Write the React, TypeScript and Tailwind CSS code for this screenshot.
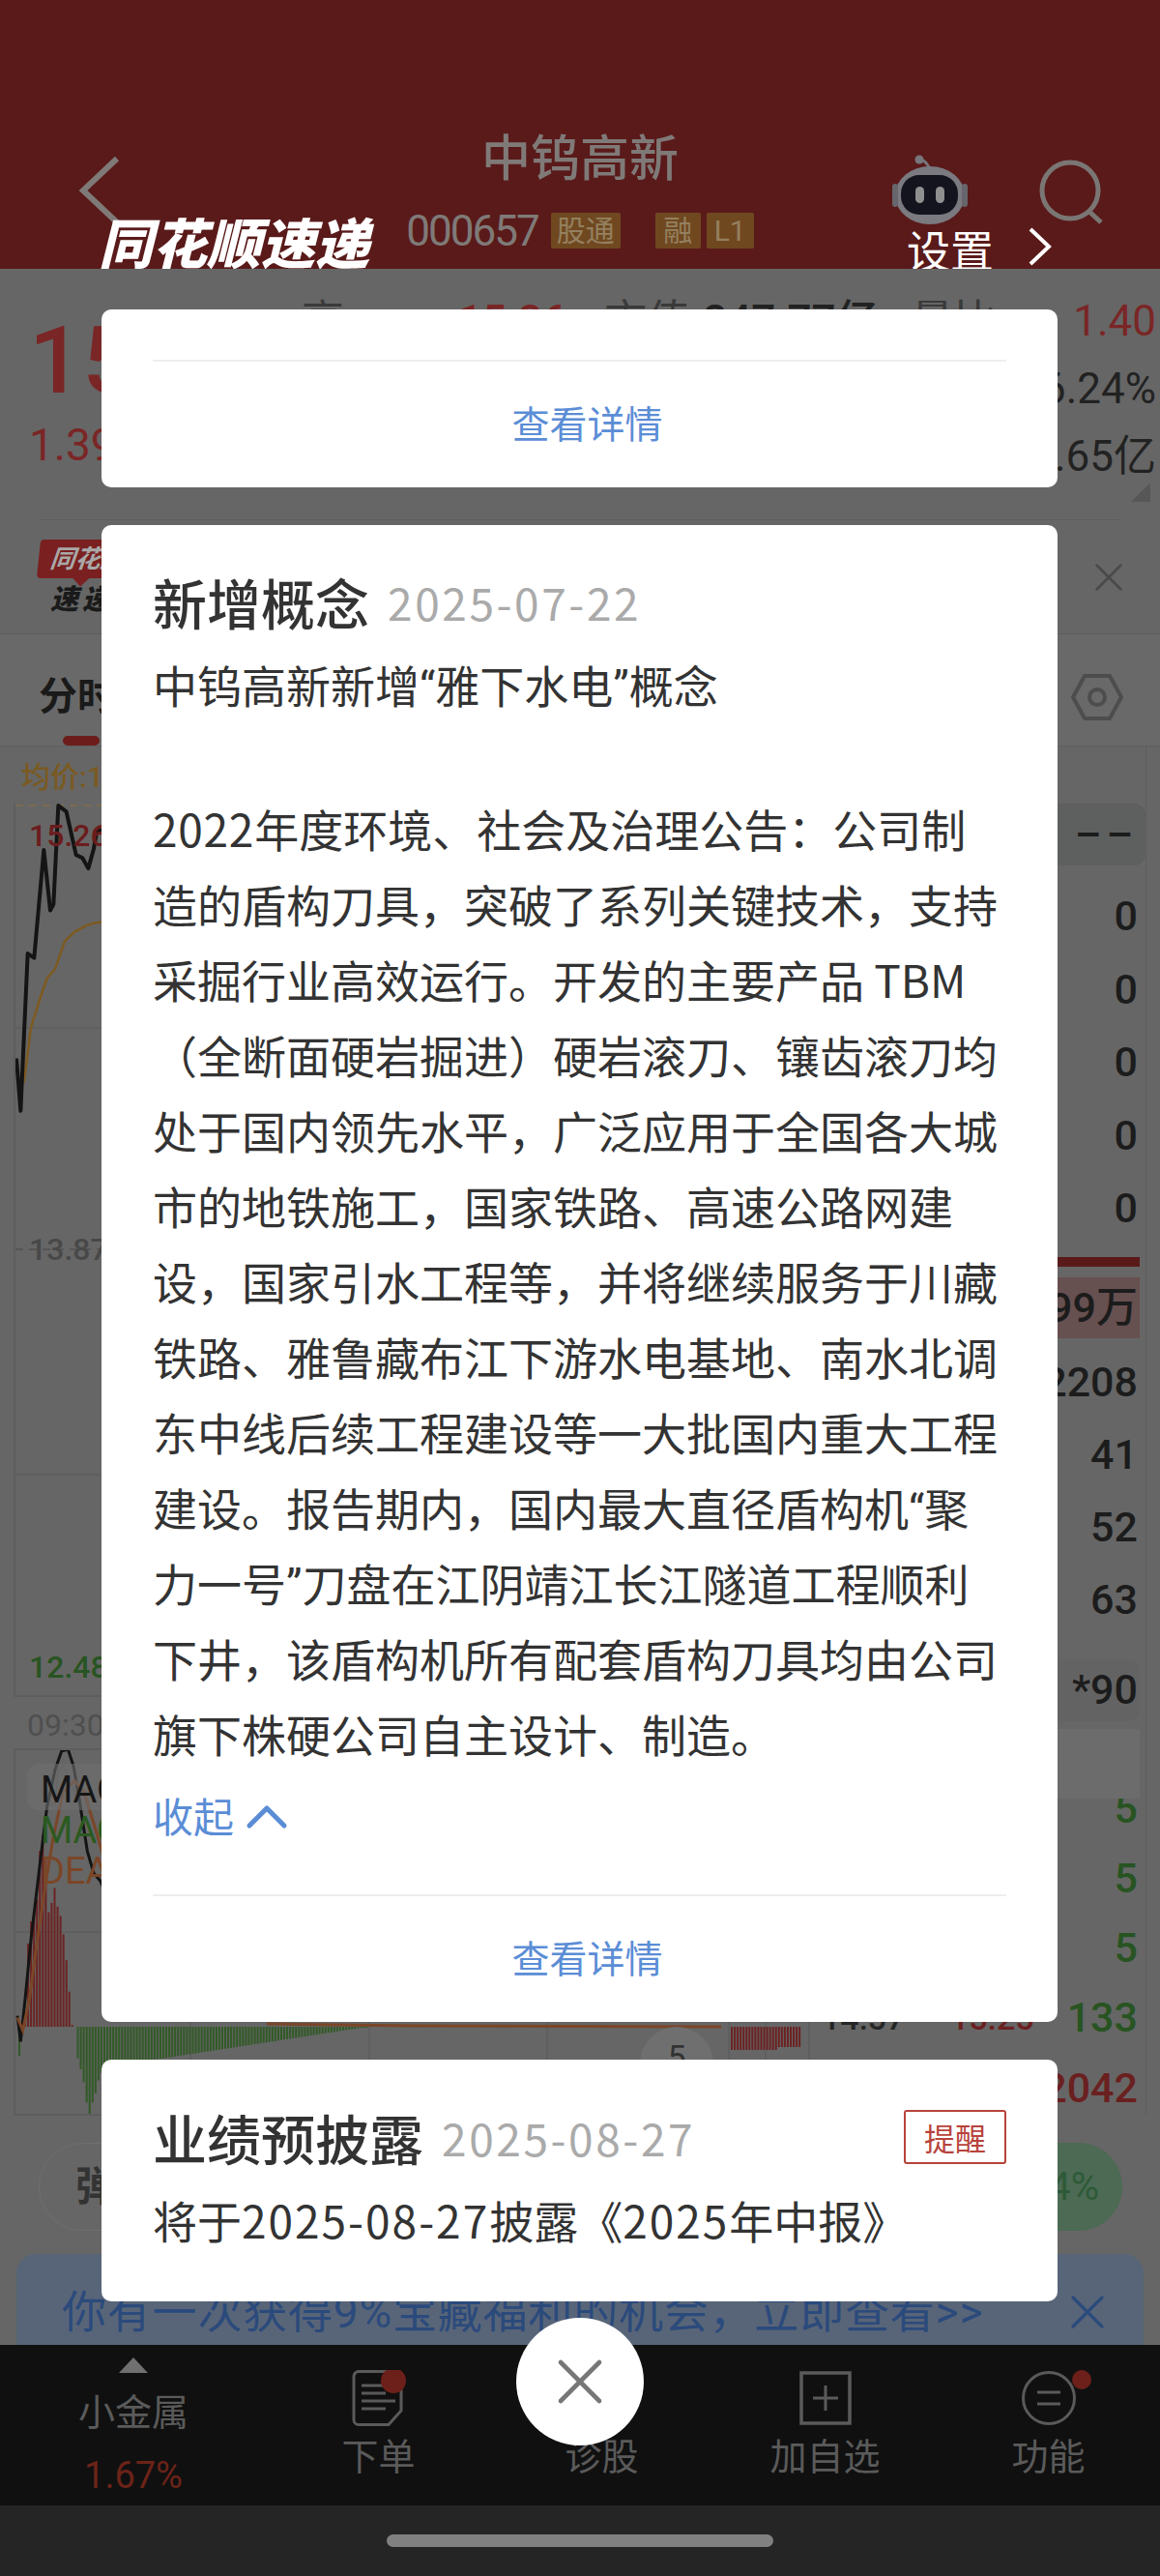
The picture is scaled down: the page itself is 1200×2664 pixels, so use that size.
import React from 'react';
import { ChevronUp, X } from 'lucide-react';

// page coordinates -> svg coordinates for the two charts
const pts = (list: number[][], sx: number, sy: number, oy: number) =>
  list.map(([x, y]) => `${x / sx - 14},${oy + y / sy}`).join(' ');

const priceLine = [[45, 650], [58, 735], [80, 480], [100, 487], [130, 312], [150, 410], [160, 400], [175, 240], [200, 250], [230, 320], [250, 325], [268, 342], [285, 310], [295, 280], [330, 280]];
const avgLine = [[68, 690], [90, 600], [120, 550], [140, 520], [165, 505], [195, 460], [225, 445], [260, 435], [290, 430], [330, 428]];
const difLine = [[48, 1005], [58, 1075], [72, 960], [90, 800], [120, 580], [140, 440], [165, 340], [185, 290], [205, 285], [222, 330], [240, 420], [265, 560], [285, 620], [305, 640], [330, 690]];
const deaLine = [[48, 1010], [65, 1045], [85, 960], [110, 800], [135, 650], [160, 520], [190, 400], [225, 370], [255, 400], [290, 500], [330, 620]];
const maLine = [[130, 445], [150, 435], [165, 430], [175, 340], [190, 330], [210, 370], [235, 420]];

const redTops = [1000, 810, 750, 720, 690, 560, 515, 640, 725, 700, 660, 710, 735, 785, 855, 940, 1030];
const greenBottoms = [1120, 1150, 1185, 1240, 1275, 1240, 1215, 1180, 1160];

const tickRows = ['2208', '41', '52', '63'];

const paragraph = [
  '2022年度环境、社会及治理公告：公司制',
  '造的盾构刀具，突破了系列关键技术，支持',
  '采掘行业高效运行。开发的主要产品 TBM',
  '（全断面硬岩掘进）硬岩滚刀、镶齿滚刀均',
  '处于国内领先水平，广泛应用于全国各大城',
  '市的地铁施工，国家铁路、高速公路网建',
  '设，国家引水工程等，并将继续服务于川藏',
  '铁路、雅鲁藏布江下游水电基地、南水北调',
  '东中线后续工程建设等一大批国内重大工程',
  '建设。报告期内，国内最大直径盾构机“聚',
  '力一号”刀盘在江阴靖江长江隧道工程顺利',
  '下井，该盾构机所有配套盾构刀具均由公司',
  '旗下株硬公司自主设计、制造。',
];

// the app sets curly quotes in a latin face and its digits a little wider
function BodyText({ text, digits = 'tracking-[0.75px]' }: { text: string; digits?: string }) {
  return (
    <>
      {text.split(/([“”]|\d[\d-]*)/).map((part, i) => {
        if (part === '“' || part === '”') return <span key={i} className="font-['Roboto'] leading-none">{part}</span>;
        if (/^\d/.test(part)) return <span key={i} className={digits}>{part}</span>;
        return part;
      })}
    </>
  );
}

function PriceChart() {
  return (
    <svg className="absolute inset-0" width="824" height="924" fill="none">
      <line x1="0" y1="2" x2="824" y2="2" stroke="#7a6a50" strokeWidth="2" strokeDasharray="8 6" />
      <line x1="0" y1="232" x2="824" y2="232" stroke="#5e5e5e" strokeWidth="1.5" />
      <line x1="0" y1="461" x2="824" y2="461" stroke="#555" strokeWidth="2" strokeDasharray="8 6" />
      <line x1="0" y1="694" x2="824" y2="694" stroke="#5e5e5e" strokeWidth="1.5" />
      <polyline points={pts(avgLine, 3, 1.568, -151)} stroke="#7d5a20" strokeWidth="2.5" />
      <polyline points={pts(priceLine, 3, 1.568, -151)} stroke="#141414" strokeWidth="4" strokeLinejoin="round" />
    </svg>
  );
}

function MacdChart() {
  const oy = -110;
  const zero = 286;
  return (
    <svg className="absolute inset-0" width="820" height="376" fill="none">
      <line x1="0" y1="188" x2="820" y2="188" stroke="#5e5e5e" strokeWidth="1.5" />
      {[181, 366, 550, 738, 776].map((x) => (
        <line key={x} x1={x} y1="0" x2={x} y2="376" stroke="#5e5e5e" strokeWidth="1.5" />
      ))}
      {redTops.map((t, i) => (
        <rect key={i} x={9 + i * 3.05} y={oy + t / 2.613} width="2" height={zero - (oy + t / 2.613)} fill="#6b2222" />
      ))}
      <rect x="3" y={zero} width="2" height="30" fill="#315a26" />
      {greenBottoms.map((b, i) => (
        <rect key={i} x={63.5 + i * 3.05} y={zero} width="2" height={(b - 1035) / 2.613} fill="#315a26" />
      ))}
      {Array.from({ length: 90 }, (_, i) => (
        <rect key={i} x={91 + i * 3.05} y={zero} width="2" height={Math.max(1, 42 - i * 0.47)} fill="#315a26" />
      ))}
      <polyline points={pts(maLine, 3, 2.613, oy)} stroke="#5c5c5c" strokeWidth="2" />
      <polyline points={pts(difLine, 3, 2.613, oy)} stroke="#141414" strokeWidth="3" />
      <polyline points={pts(deaLine, 3, 2.613, oy)} stroke="#7a4628" strokeWidth="3" />
      <polyline points="260,283 328,284 412,285 730,286" stroke="#7a4628" strokeWidth="3" />
      {Array.from({ length: 24 }, (_, i) => (
        <rect key={i} x={740 + i * 3.05} y={zero} width="2" height={24 - (i > 15 ? 3 : 0)} fill="#6b2222" />
      ))}
    </svg>
  );
}

function TickColumn() {
  return (
    <div className="w-[348px] flex flex-col text-[43px] leading-none font-medium text-[#1c1c1c] border-r border-[#5e5e5e]">
      <div className="h-[59px] shrink-0" />
      <div className="h-[64px] shrink-0 flex items-center justify-end pr-[8px] bg-[#5d605e] rounded-r-xl border-t border-[#5e5e5e] tracking-[5px]">––</div>
      <div className="mt-[15px] flex flex-col">
        {[0, 1, 2, 3, 4].map((i) => (
          <div key={i} className="h-[75.5px] flex items-center justify-end pr-[8px]">0</div>
        ))}
      </div>
      <div className="mt-[12px] h-[10px] mr-[6px] bg-[#5a1a1a]" />
      <div className="mt-[11px] h-[63px] mr-[6px] bg-[#675050] flex items-center justify-end pr-[2px]">1.99万</div>
      <div className="mt-[8px] flex flex-col">
        {tickRows.map((v) => (
          <div key={v} className="h-[75px] flex items-center justify-end pr-[8px]">{v}</div>
        ))}
      </div>
      <div className="mt-[24px] h-[64px] mr-[6px] rounded-xl bg-[#636363] flex items-center justify-end pr-[2px]">*90</div>
      <div className="relative z-10 mt-[8px] h-[72px] mr-[6px] bg-[#6c6c6c]" />
      <div className="-mt-[25px] flex flex-col text-[#285422]">
        {['5', '5', '5'].map((v, i) => (
          <div key={i} className="h-[72px] flex items-center justify-end pr-[8px]">{v}</div>
        ))}
        <div className="h-[72px] flex items-center justify-end pr-[8px]">
          <span className="flex-1 pl-[12px] text-[34px] text-[#262626]">14:57</span>
          <span className="mr-[34px] text-[34px] text-[#6b2020]">15.25</span>
          <span>133</span>
        </div>
        <div className="h-[65px] pt-[15px] text-right pr-[8px] text-[#6b2020]">2042</div>
      </div>
    </div>
  );
}

function Card({ children, className }: { children: React.ReactNode; className: string }) {
  return <div className={`bg-white rounded-[10px] px-[53px] ${className}`}>{children}</div>;
}

function DetailLink() {
  return (
    <div className="border-t-2 border-[#eeeeee] flex-1 flex items-center justify-center pl-[16px] pb-[6px] text-[39px] text-[#5b8dd6]">
      查看详情
    </div>
  );
}

function NavLabel({ children }: { children: React.ReactNode }) {
  return <div className="mt-[11px] h-[42px] leading-[42px] text-[38px] text-[#5a5a5a]">{children}</div>;
}

export default function App() {
  return (
    <div className="relative w-[1200px] h-[2664px] overflow-hidden bg-[#666666] font-['Roboto','Noto_Sans_CJK_SC',sans-serif]">
      {/* Header */}
      <header className="relative h-[278px] bg-[#5a1a1a] overflow-hidden flex flex-col items-center pt-[138px]">
        <div className="text-[51px] leading-[54px] font-medium text-[#7f7a78]">中钨高新</div>
        <div className="mt-[28px] flex items-center h-[37px] text-[30px] text-[#94805f]">
          <span className="text-[44px] tracking-[-2px] text-[#7f7a78] mr-[13px]">000657</span>
          <span className="w-[72px] h-[37px] bg-[#704820] rounded-[2px] flex items-center justify-center">股通</span>
          <span className="ml-[36px] w-[47px] h-[37px] bg-[#704820] rounded-[2px] flex items-center justify-center">融</span>
          <span className="ml-[6px] w-[49px] h-[37px] bg-[#704820] rounded-[2px] flex items-center justify-center">L1</span>
        </div>
        <svg className="absolute left-[80px] top-[160px]" width="50" height="72" fill="none" stroke="#7f7a78" strokeWidth="6">
          <polyline points="41,4 6,37 41,70" />
        </svg>
        <svg className="absolute left-[915px] top-[155px]" width="95" height="80" viewBox="915 155 95 80" fill="none">
          <path d="M951 165 Q957 165 961 173" stroke="#77767c" strokeWidth="3" />
          <circle cx="951" cy="165" r="4.5" fill="#77767c" />
          <ellipse cx="962" cy="202" rx="36" ry="30" fill="#7a7a80" />
          <rect x="923" y="190" width="6" height="24" rx="3" fill="#66666c" />
          <rect x="995" y="190" width="6" height="24" rx="3" fill="#66666c" />
          <rect x="932" y="181" width="59" height="41" rx="19" fill="#14141f" />
          <rect x="947" y="193" width="9" height="17" rx="4.5" fill="#8f8f8f" />
          <rect x="968" y="193" width="9" height="17" rx="4.5" fill="#8f8f8f" />
        </svg>
        <svg className="absolute left-[1070px] top-[160px]" width="75" height="75" fill="none" stroke="#7a7674" strokeWidth="5">
          <circle cx="37" cy="37" r="29" />
          <line x1="56" y1="58" x2="69" y2="70" />
        </svg>
        <div className="absolute left-[102px] top-[224px] text-[56px] leading-[60px] font-black italic text-white whitespace-nowrap">同花顺速递</div>
        <div className="absolute left-[938px] top-[238px] text-[45px] leading-[48px] text-white">设置</div>
        <svg className="absolute left-[1060px] top-[232px]" width="32" height="46" fill="none" stroke="#ffffff" strokeWidth="4">
          <polyline points="6,5 25,23 6,41" />
        </svg>
      </header>

      {/* Quote summary */}
      <section className="relative h-[259px] flex pl-[30px] pr-[4px]">
        <div className="w-[282px] flex flex-col text-[#7a2626]">
          <div className="mt-[39px] text-[97px] leading-[112px] font-medium">15.26</div>
          <div className="mt-[4px] text-[46px] leading-[54px]">1.39 10.03%</div>
        </div>
        <div className="flex-1 flex flex-col text-[44px] leading-[70px] text-[#222222]">
          <div className="mt-[19px] flex">
            <span className="text-[#3a3a3a]">高</span>
            <span className="ml-[118px] text-[#7a2626] font-medium">15.36</span>
            <span className="ml-[39px] text-[#3a3a3a]">市值</span>
            <span className="ml-[14px] font-medium">247.77亿</span>
            <span className="ml-[34px] text-[#3a3a3a]">量比</span>
            <span className="ml-auto text-[#7a2626]">1.40</span>
          </div>
          <div className="text-right">6.24%</div>
          <div className="text-right">3.65亿</div>
        </div>
        <div className="absolute right-[10px] bottom-[18px] w-0 h-0 border-l-[20px] border-l-transparent border-b-[20px] border-b-[#575757]" />
      </section>

      {/* News strip */}
      <section className="h-[118px] mx-[40px] border-t border-[#5e5e5e] flex items-center justify-between">
        <div className="flex flex-col items-start">
          <div className="relative h-[40px] w-[150px] bg-[#7a2020] rounded-[4px] -skew-x-6 flex items-center pl-[12px] text-[26px] font-bold italic text-[#a8a8a8] whitespace-nowrap">
            同花顺
            <span className="absolute left-[40px] -bottom-[6px] w-[12px] h-[12px] rotate-45 bg-[#7a2020]" />
          </div>
          <div className="mt-[7px] ml-[12px] text-[29px] leading-[30px] font-black italic tracking-[4px] text-[#1a1a1a]">速递</div>
        </div>
        <X className="-mr-[12px] w-[50px] h-[50px] text-[#4a4a4a]" strokeWidth={1.2} />
      </section>

      {/* Tabs */}
      <section className="relative h-[117px] border-t border-b border-[#5e5e5e] bg-[#696969] flex items-center justify-between pl-[40px] pr-[38px] pt-[14px]">
        <span className="text-[40px] font-bold text-[#1a1a1a]">分时</span>
        <svg width="54" height="50" viewBox="0 0 54 50" fill="none" stroke="#4d4d4d" strokeWidth="4">
          <polygon points="14,3 40,3 52,25 40,47 14,47 2,25" strokeLinejoin="round" />
          <circle cx="27" cy="25" r="8" />
        </svg>
        <span className="absolute left-[65px] bottom-0 w-[38px] h-[10px] rounded-full bg-[#6d1c1c]" />
      </section>

      {/* Chart and ticks */}
      <section className="mx-[14px] flex h-[1416px]">
        <div className="w-[824px] flex flex-col">
          <div className="h-[59px] shrink-0 pl-[8px] pt-[16px] text-[30px] leading-[32px] font-medium text-[#7a5a22]">均价:14.48</div>
          <div className="relative h-[924px] shrink-0 border-l-2 border-b-2 border-[#5e5e5e]">
            <PriceChart />
            <span className="absolute left-[14px] top-[16px] text-[32px] leading-[34px] font-medium text-[#6b1c1c]">15.26</span>
            <span className="absolute left-[14px] top-[444px] text-[32px] leading-[34px] font-medium text-[#484848]">13.87</span>
            <span className="absolute left-[14px] top-[876px] text-[32px] leading-[34px] font-medium text-[#285422]">12.48</span>
          </div>
          <div className="h-[53px] shrink-0 pl-[14px] pt-[12px] text-[32px] leading-[34px] text-[#4f4f4f]">09:30</div>
          <div className="relative h-[380px] shrink-0 border-2 border-[#5e5e5e]">
            <MacdChart />
            <div className="absolute left-[12px] top-[14px] w-[220px] h-[48px] rounded-xl bg-[#6e6e6e]/60" />
            <div className="absolute left-[26px] top-[20px] text-[38px] leading-[42px] whitespace-nowrap">
              <div className="text-[#161616]">MACD(12,26,9)</div>
              <div className="text-[#2a5a20]">MACD:1.02</div>
              <div className="text-[#7a4628]">DEA:0.88</div>
            </div>
            <div className="absolute left-[646px] top-[286px] w-[76px] h-[76px] rounded-full bg-[#6f6f6f] flex justify-center pt-[6px] text-[34px] text-[#333333]">5</div>
          </div>
        </div>
        <TickColumn />
      </section>

      {/* Strength pills */}
      <section className="mt-[28px] h-[91px] flex justify-between pl-[40px] pr-[39px]">
        <div className="w-[420px] rounded-full border border-[#6f6f6f] flex items-center pl-[37px] text-[42px] font-bold text-[#333333]">弹性</div>
        <div className="w-[200px] rounded-full bg-[#4c6a54] flex items-center justify-end pr-[24px] text-[40px] text-[#2e5a38]">54%</div>
      </section>

      {/* Promo banner */}
      <section className="mt-[24px] mx-[17px] h-[94px] rounded-t-[20px] bg-[#586578] flex items-start justify-between pl-[47px] pr-[28px] pt-[30px] text-[46px] leading-[60px] tracking-[0.8px] text-[#2b4a7c]">
        <span className="whitespace-nowrap">你有一次获得9%宝藏福利的机会，立即查看&gt;&gt;</span>
        <X className="w-[60px] h-[60px]" strokeWidth={1.3} />
      </section>

      {/* Bottom nav */}
      <nav className="h-[166px] bg-[#101010] grid grid-cols-[276px_repeat(4,231px)]">
        <div className="flex flex-col items-center pt-[13px]">
          <span className="w-0 h-0 border-l-[15px] border-r-[15px] border-b-[16px] border-l-transparent border-r-transparent border-b-[#707070]" />
          <div className="mt-[20px] h-[42px] leading-[42px] text-[38px] text-[#5a5a5a]">小金属</div>
          <div className="mt-[23px] h-[42px] leading-[42px] text-[38px] text-[#6b2318]">1.67%</div>
        </div>
        <div className="flex flex-col items-center pt-[26px]">
          <svg width="58" height="58" viewBox="0 0 58 58" fill="none" stroke="#5a5a5a" strokeWidth="3">
            <path d="M8 1.5H47a5 5 0 0 1 5 5V42L39 56.5H8a5 5 0 0 1-5-5V6.5a5 5 0 0 1 5-5Z" />
            <path d="M11 16H36M11 24H36M11 32H46M11 40H36" />
            <circle cx="44" cy="11" r="13" fill="#6d1f1a" stroke="none" />
          </svg>
          <NavLabel>下单</NavLabel>
        </div>
        <div className="flex flex-col items-center pt-[84px]">
          <NavLabel>诊股</NavLabel>
        </div>
        <div className="flex flex-col items-center pt-[26px]">
          <svg width="56" height="58" viewBox="0 0 56 58" fill="none" stroke="#5a5a5a" strokeWidth="3.5">
            <rect x="3" y="3" width="50" height="52" />
            <path d="M28 16V42M15 29H41" strokeWidth="3" />
          </svg>
          <NavLabel>加自选</NavLabel>
        </div>
        <div className="relative flex flex-col items-center pt-[26px]">
          <svg width="58" height="58" viewBox="0 0 58 58" fill="none" stroke="#5a5a5a" strokeWidth="3">
            <circle cx="29" cy="29" r="26.5" />
            <path d="M17 23H41M17 35H41" />
          </svg>
          <NavLabel>功能</NavLabel>
          <span className="absolute left-[140px] top-[26px] w-[20px] h-[20px] rounded-full bg-[#6d1f1a]" />
        </div>
      </nav>

      {/* Gesture bar */}
      <div className="h-[73px] bg-[#252525] flex justify-center pt-[30px]">
        <span className="w-[400px] h-[13px] rounded-full bg-[#808080]" />
      </div>

      {/* Cards laid over the dimmed page */}
      <div className="absolute z-20 left-[105px] w-[989px] top-[320px] flex flex-col gap-[39px] font-['Noto_Sans_CJK_SC',sans-serif] text-[#333333]">
        <Card className="h-[184px] flex flex-col pt-[52px]">
          <DetailLink />
        </Card>

        <Card className="h-[1548px] flex flex-col pt-[44px]">
          <div className="flex items-center h-[70px]">
            <span className="text-[56px] font-medium">新增概念</span>
            <span className="ml-[19px] text-[46px] tracking-[2.6px] text-[#aaaaaa]">2025-07-22</span>
          </div>
          <div className="mt-[11px] h-[78px] text-[46px] leading-[78px] whitespace-nowrap">
            <BodyText text="中钨高新新增“雅下水电”概念" />
          </div>
          <div className="mt-[71px] text-[46px] leading-[78px] whitespace-nowrap">
            {paragraph.map((line) => (
              <div key={line} className="h-[78px]">
                <BodyText text={line} />
              </div>
            ))}
          </div>
          <div className="mt-[5px] h-[80px] flex items-center text-[42px] text-[#5b8dd6]">
            收起
            <ChevronUp className="-ml-[2px] mt-[6px] w-[72px] h-[72px]" strokeWidth={1.7} />
          </div>
          <div className="mt-[43px] flex-1 flex flex-col">
            <DetailLink />
          </div>
        </Card>

        <Card className="h-[250px] pt-[45px]">
          <div className="flex items-center h-[70px]">
            <span className="text-[56px] font-medium">业绩预披露</span>
            <span className="ml-[19px] text-[46px] tracking-[2.6px] text-[#aaaaaa]">2025-08-27</span>
            <span className="ml-auto w-[106px] h-[56px] border-2 border-[#b8433c] rounded-[3px] flex items-center justify-center text-[32px] text-[#b8433c]">提醒</span>
          </div>
          <div className="mt-[11px] h-[78px] text-[46px] leading-[78px] whitespace-nowrap">
            <BodyText text="将于2025-08-27披露《2025年中报》" digits="tracking-[2px]" />
          </div>
        </Card>
      </div>

      {/* Close button */}
      <button className="absolute z-30 left-[534px] top-[2397px] w-[132px] h-[132px] rounded-full bg-white flex items-center justify-center text-[#777777]">
        <X className="w-[80px] h-[80px]" strokeWidth={1.4} />
      </button>
    </div>
  );
}
